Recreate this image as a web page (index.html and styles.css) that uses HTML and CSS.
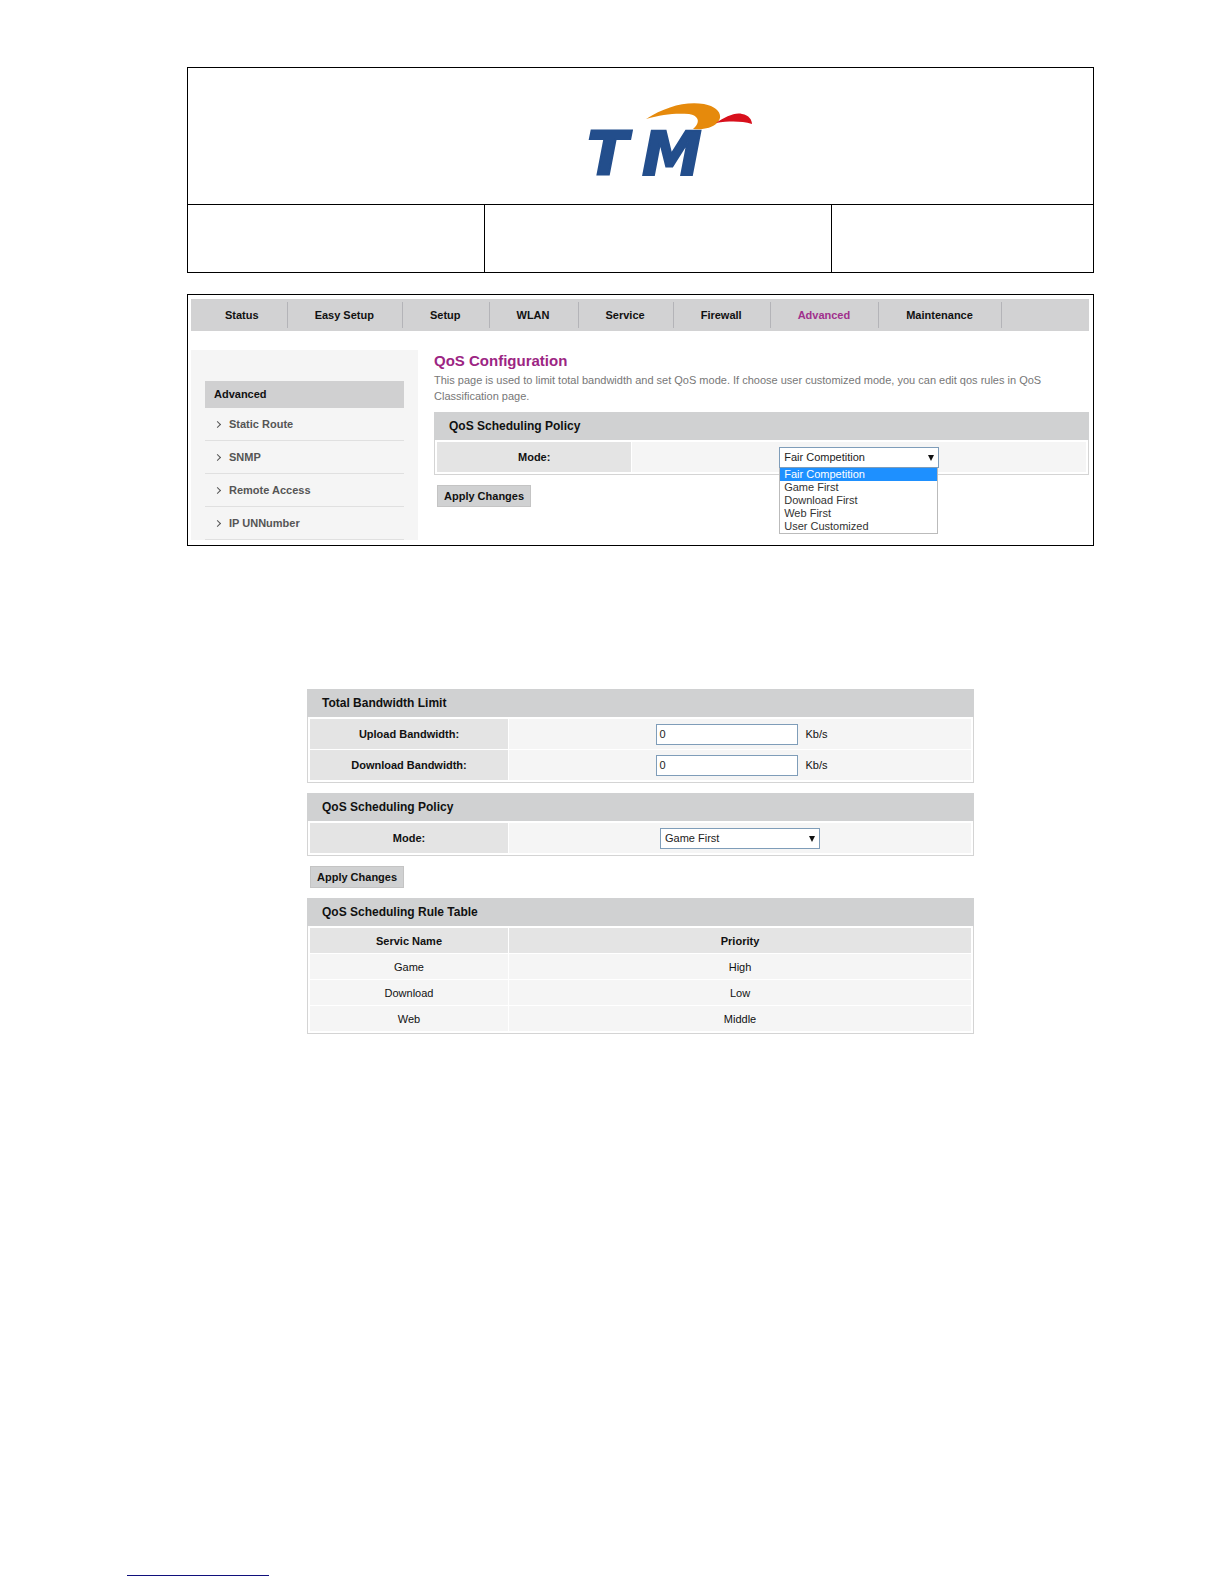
FILE: index.html
```html
<!DOCTYPE html>
<html lang="en">
  <head>
    <meta charset="UTF-8" />
    <meta name="viewport" content="width=device-width, initial-scale=1.0" />
    <title>QoS Configuration</title>
    <link rel="stylesheet" href="styles.css">
  </head>
  <body>
    <header class="doc-header">
      <div class="doc-logo">
        <svg width="190" height="96" viewBox="0 0 190 96" role="img" aria-label="TM">
          <text class="logo-text" x="20" y="72">T</text>
          <text class="logo-text" x="75" y="72">M</text>
          <path d="M79 16 C98 4 118 -2 137 1 C152 4 157 13 150 20 C145 25 136 27 126 26 C133 20 133 13 122 11 C109 10 95 11 79 16 Z" fill="#e68a0c" />
          <path d="M149 20 C158 14 168 9 175 11 C182 12 185 17 185 21 C174 18 163 18 149 20 Z" fill="#d8101c" />
        </svg>
      </div>
      <div class="doc-cells">
        <div></div>
        <div></div>
        <div></div>
      </div>
    </header>

    <div class="router">
      <nav>
        <ul class="menu">
          <li><a href="#">Status</a></li>
          <li><a href="#">Easy Setup</a></li>
          <li><a href="#">Setup</a></li>
          <li><a href="#">WLAN</a></li>
          <li><a href="#">Service</a></li>
          <li><a href="#">Firewall</a></li>
          <li><a href="#" class="active">Advanced</a></li>
          <li><a href="#">Maintenance</a></li>
        </ul>
      </nav>
      <div class="router-body">
        <aside class="sidebar">
          <h2>Advanced</h2>
          <ul>
            <li><a href="#">Static Route</a></li>
            <li><a href="#">SNMP</a></li>
            <li><a href="#">Remote Access</a></li>
            <li><a href="#">IP UNNumber</a></li>
          </ul>
        </aside>
        <main class="content">
          <h1>QoS Configuration</h1>
          <p>This page is used to limit total bandwidth and set QoS mode. If choose user customized mode, you can edit qos rules in QoS Classification page.</p>
          <section class="panel">
            <h3>QoS Scheduling Policy</h3>
            <table>
              <tr>
                <th><label for="mode">Mode:</label></th>
                <td>
                  <div class="select-box">
                    <select id="mode">
                      <option>Fair Competition</option>
                      <option>Game First</option>
                      <option>Download First</option>
                      <option>Web First</option>
                      <option>User Customized</option>
                    </select>
                    <ul class="options">
                      <li class="selected">Fair Competition</li>
                      <li>Game First</li>
                      <li>Download First</li>
                      <li>Web First</li>
                      <li>User Customized</li>
                    </ul>
                  </div>
                </td>
              </tr>
            </table>
          </section>
          <button type="button">Apply Changes</button>
        </main>
      </div>
    </div>

    <div class="settings">
      <section class="panel">
        <h3>Total Bandwidth Limit</h3>
        <table>
          <tr>
            <th><label for="upload">Upload Bandwidth:</label></th>
            <td><div class="field"><input type="text" id="upload" value="0" /> <span>Kb/s</span></div></td>
          </tr>
          <tr>
            <th><label for="download">Download Bandwidth:</label></th>
            <td><div class="field"><input type="text" id="download" value="0" /> <span>Kb/s</span></div></td>
          </tr>
        </table>
      </section>
      <section class="panel">
        <h3>QoS Scheduling Policy</h3>
        <table>
          <tr>
            <th><label for="policy">Mode:</label></th>
            <td>
              <div class="select-box">
                <select id="policy">
                  <option>Fair Competition</option>
                  <option selected>Game First</option>
                  <option>Download First</option>
                  <option>Web First</option>
                  <option>User Customized</option>
                </select>
              </div>
            </td>
          </tr>
        </table>
      </section>
      <button type="button">Apply Changes</button>
      <section class="panel">
        <h3>QoS Scheduling Rule Table</h3>
        <table class="rules">
          <thead>
            <tr>
              <th>Servic Name</th>
              <th>Priority</th>
            </tr>
          </thead>
          <tbody>
            <tr>
              <td>Game</td>
              <td>High</td>
            </tr>
            <tr>
              <td>Download</td>
              <td>Low</td>
            </tr>
            <tr>
              <td>Web</td>
              <td>Middle</td>
            </tr>
          </tbody>
        </table>
      </section>
    </div>

    <footer></footer>
  </body>
</html>
```

FILE: styles.css
```css
* {
  box-sizing: border-box;
}

body {
  display: flex;
  flex-direction: column;
  min-height: 100vh;
  margin: 0;
  padding: 67px 130px 8px 187px;
  background: #fff;
  color: #111;
  font-family: "Liberation Sans", Arial, sans-serif;
  font-size: 11px;
}

h1,
h2,
h3,
p,
ul {
  margin: 0;
  padding: 0;
}

ul {
  list-style: none;
}

a {
  color: inherit;
  text-decoration: none;
}

/* Document header */
.doc-header {
  border: 1px solid #000;
}

.doc-logo {
  display: flex;
  justify-content: center;
  height: 136px;
  padding: 35px 0 0 42px;
}

.logo-text {
  font-family: "DejaVu Sans", sans-serif;
  font-size: 60px;
  font-weight: bold;
  font-style: italic;
  fill: #234e8c;
  stroke: #234e8c;
  stroke-width: 2px;
}

.doc-cells {
  display: grid;
  grid-template-columns: 296fr 347fr 262fr;
  height: 68px;
  border-top: 1px solid #000;
}

.doc-cells div + div {
  border-left: 1px solid #000;
}

/* Router page */
.router {
  margin-top: 21px;
  padding: 4px 4px 5px 3px;
  border: 1px solid #000;
}

.menu {
  display: flex;
  align-items: center;
  height: 32px;
  padding-left: 7px;
  background: #d2d2d3;
  font-weight: bold;
}

.menu li {
  padding: 0 28px 0 27px;
  border-right: 1px solid #b4b4b8;
  line-height: 26px;
}

.menu .active {
  color: #a0308c;
}

.router-body {
  display: flex;
  gap: 16px;
  margin-top: 19px;
}

.sidebar {
  width: 227px;
  padding: 31px 14px 0;
  background: #f5f5f5;
}

.sidebar h2 {
  padding-left: 9px;
  background: #d0d0d1;
  font-size: 11px;
  line-height: 27px;
}

.sidebar li {
  height: 33px;
  padding-left: 10px;
  border-bottom: 1px solid #e0e0e0;
  color: #555;
  font-weight: bold;
  line-height: 32px;
}

.sidebar li::before {
  content: "";
  display: inline-block;
  width: 4px;
  height: 4px;
  margin: 0 9px 1px 0;
  border: solid #555;
  border-width: 1px 1px 0 0;
  transform: rotate(45deg);
}

.content {
  flex: 1;
}

.content h1 {
  color: #9c2583;
  font-size: 15px;
  line-height: 22px;
}

.content p {
  margin-bottom: 8px;
  padding-right: 40px;
  color: #777;
  line-height: 16px;
}

/* Panels */
.panel {
  margin-bottom: 10px;
  border: 1px solid #d4d4d4;
  border-top: 0;
}

.panel h3 {
  margin: 0 -1px;
  padding-left: 15px;
  background: #d0d1d2;
  font-size: 12px;
  line-height: 28px;
}

.panel table {
  width: calc(100% - 2px);
  margin: 1px;
  border-spacing: 1px;
  table-layout: fixed;
}

.panel th,
.panel td {
  height: 30px;
  padding: 0;
  background: #f5f5f5;
  text-align: center;
}

.panel th {
  background: #e4e4e4;
}

.panel th:first-child {
  width: 30%;
}

.panel .rules th,
.panel .rules td {
  height: 25px;
}

button {
  height: 22px;
  margin: 0 0 10px 3px;
  padding: 0 6px;
  border: 1px solid #c4c4c4;
  background: #d0d1d2;
  color: #111;
  font: bold 11px "Liberation Sans", Arial, sans-serif;
}

/* Form fields */
.field {
  display: flex;
  align-items: center;
  justify-content: center;
  gap: 7px;
  padding-left: 4px;
}

input,
select {
  height: 21px;
  border: 1px solid #7f9db9;
  border-radius: 0;
  background: #fff;
  color: #222;
  font: 11px "Liberation Sans", Arial, sans-serif;
}

input {
  width: 142px;
  padding: 0 2px;
}

.select-box {
  position: relative;
  width: 160px;
  margin: 0 auto;
}

.select-box select {
  display: block;
  width: 100%;
  padding: 0 4px;
  appearance: none;
}

.select-box::after {
  content: "";
  position: absolute;
  top: 8px;
  right: 5px;
  border: solid transparent;
  border-width: 6px 3px 0;
  border-top-color: #111;
}

.options {
  position: absolute;
  top: 100%;
  left: 0;
  right: 1px;
  border: 1px solid #bbb;
  border-top: 0;
  background: #fff;
  color: #333;
  line-height: 13px;
  text-align: left;
}

.options li {
  padding-left: 4px;
}

.options .selected {
  background: #1e90ff;
  color: #fff;
}

/* Bandwidth and rule settings */
.settings {
  margin: 143px 120px 0;
}

footer {
  width: 142px;
  margin: auto 0 0 -60px;
  border-bottom: 1px solid #10107c;
}
```
